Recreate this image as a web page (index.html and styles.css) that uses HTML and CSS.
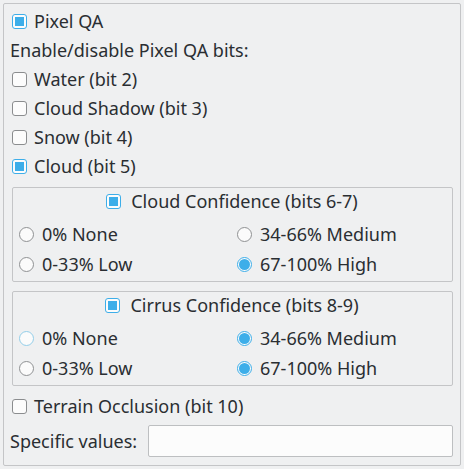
FILE: index.html
```html
<!DOCTYPE html>
<html>
<head>
<meta charset="utf-8">
<link rel="stylesheet" href="styles.css">
</head>
<body>
<div class="frame">
  <div class="row"><span class="cb checked"></span><span class="lbl">Pixel QA</span></div>
  <div class="row text">Enable/disable Pixel QA bits:</div>
  <div class="row"><span class="cb"></span><span class="lbl">Water (bit 2)</span></div>
  <div class="row"><span class="cb"></span><span class="lbl">Cloud Shadow (bit 3)</span></div>
  <div class="row"><span class="cb"></span><span class="lbl">Snow (bit 4)</span></div>
  <div class="row"><span class="cb checked"></span><span class="lbl">Cloud (bit 5)</span></div>
  <div class="group">
    <div class="gtitle"><span class="cb checked"></span><span class="lbl">Cloud Confidence (bits 6-7)</span></div>
    <div class="grid">
      <div class="row"><span class="rb"></span><span class="rlbl">0% None</span></div>
      <div class="row"><span class="rb"></span><span class="rlbl">34-66% Medium</span></div>
      <div class="row"><span class="rb"></span><span class="rlbl">0-33% Low</span></div>
      <div class="row"><span class="rb on"></span><span class="rlbl">67-100% High</span></div>
    </div>
  </div>
  <div class="group second">
    <div class="gtitle"><span class="cb checked"></span><span class="lbl">Cirrus Confidence (bits 8-9)</span></div>
    <div class="grid">
      <div class="row"><span class="rb hover"></span><span class="rlbl">0% None</span></div>
      <div class="row"><span class="rb on"></span><span class="rlbl">34-66% Medium</span></div>
      <div class="row"><span class="rb"></span><span class="rlbl">0-33% Low</span></div>
      <div class="row"><span class="rb on"></span><span class="rlbl">67-100% High</span></div>
    </div>
  </div>
  <div class="row terrain"><span class="cb"></span><span class="lbl">Terrain Occlusion (bit 10)</span></div>
  <div class="row specific"><span class="text">Specific values:</span><span class="input"></span></div>
</div>
</body>
</html>
```
FILE: styles.css
```css
html, body {
  margin: 0;
  padding: 0;
  background: #eff0f1;
}
body {
  font-family: "Noto Sans", "DejaVu Sans", sans-serif;
  font-size: 18px;
  color: #2a2e32;
  width: 464px;
  height: 469px;
  overflow: hidden;
}
.frame {
  box-sizing: border-box;
  margin: 3px;
  width: 458px;
  height: 463px;
  border: 1px solid #c4c5c7;
  border-radius: 2px;
  padding: 5px 7px 0 6px;
  display: flex;
  flex-direction: column;
  gap: 5px;
}
.row {
  height: 24px;
  display: flex;
  align-items: center;
  white-space: nowrap;
}
.cb {
  box-sizing: border-box;
  width: 15px;
  height: 15px;
  margin-left: 2px;
  border: 1px solid #8b8d8f;
  border-radius: 3px;
  background: #fcfcfc;
  flex: none;
  display: flex;
  align-items: center;
  justify-content: center;
}
.cb.checked {
  border-color: #3daee9;
}
.cb.checked::after {
  content: "";
  width: 9px;
  height: 9px;
  background: #3daee9;
}
.lbl {
  margin-left: 7px;
}
.group {
  box-sizing: border-box;
  margin: 4px 0 0 2px;
  height: 95px;
  border: 1px solid #c4c5c7;
  border-radius: 2px;
  padding: 1px 7px 0 6px;
}
.group.second {
  margin-top: 4px;
}
.gtitle {
  height: 24px;
  display: flex;
  align-items: center;
  justify-content: center;
}
.gtitle .cb {
  margin-left: 0;
}
.gtitle .lbl {
  margin-left: 10px;
}
.grid {
  margin-top: 9px;
  display: grid;
  grid-template-columns: 218px 1fr;
  row-gap: 6px;
}
.rb {
  box-sizing: border-box;
  width: 15px;
  height: 15px;
  border-radius: 50%;
  border: 1px solid #8f9193;
  background: #fbfbfb;
  flex: none;
  display: flex;
  align-items: center;
  justify-content: center;
}
.rb.hover {
  border-color: #93cee9;
}
.rb.on {
  border-color: #3daee9;
}
.rb.on::after {
  content: "";
  width: 11px;
  height: 11px;
  border-radius: 50%;
  background: #3daee9;
}
.rlbl {
  margin-left: 8px;
}
.terrain {
  margin-top: 3px;
}
.specific {
  margin-top: 2px;
  height: 32px;
}
.input {
  box-sizing: border-box;
  margin-left: 11px;
  flex: 1;
  height: 32px;
  border: 1px solid #bdbfc1;
  border-radius: 2px;
  background: #fcfcfc;
}
```
